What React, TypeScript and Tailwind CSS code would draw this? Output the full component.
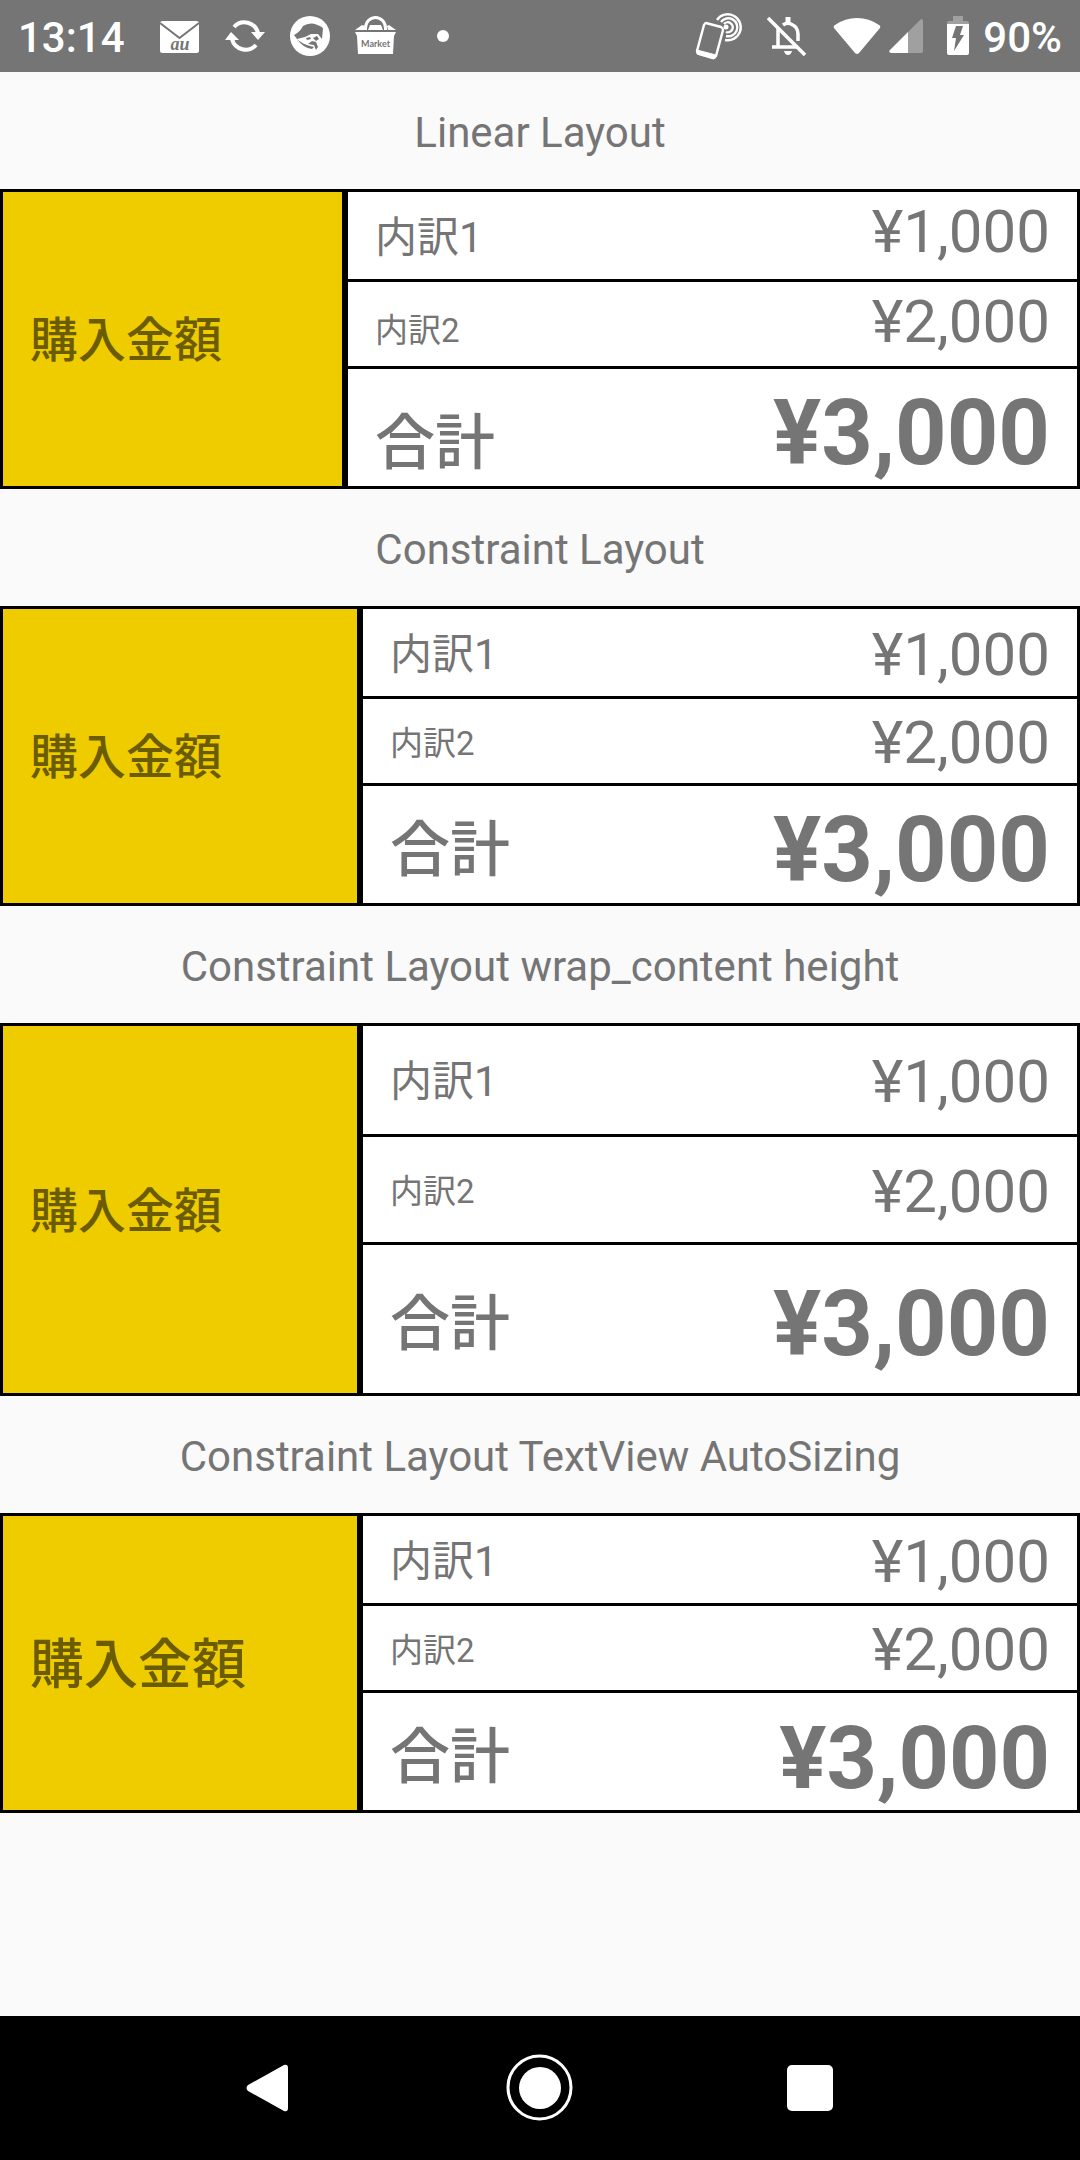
import React from "react";

type Row = { label: string; amount: string };

type TableProps = {
  title: string;
  narrow?: boolean;
  baseline?: boolean;
  tall?: boolean;
  autoSize?: boolean;
};

const rows: Row[] = [
  { label: "内訳1", amount: "¥1,000" },
  { label: "内訳2", amount: "¥2,000" },
  { label: "合計", amount: "¥3,000" },
];

const labelText = ["text-[42px]", "text-[33px]", "text-[60px] font-medium"];
const amountText = ["text-[60px]", "text-[60px]", "text-[90px] font-bold"];
const shortRows = ["h-[90px]", "h-[87px]", "h-[117px]"];
const tallRows = ["h-[111px]", "h-[108px]", "h-[148px]"];
const centeredPadding = ["pt-1", "pt-1", "pt-3"];
const baselinePadding = ["pb-2", "pb-1", "pt-3"];

function PriceTable({ title, narrow, baseline, tall, autoSize }: TableProps) {
  const heights = tall ? tallRows : shortRows;
  const padding = baseline ? baselinePadding : centeredPadding;
  return (
    <section>
      <h2 className="flex h-[117px] items-center justify-center pt-1 text-[42px] leading-[50px]">{title}</h2>
      <table className="w-full table-fixed border-separate border-spacing-0 border-[3px] border-black bg-white">
        <colgroup>
          <col className={narrow ? "w-[345px]" : "w-[360px]"} />
          <col />
        </colgroup>
        <tbody>
          {rows.map((row, i) => (
            <tr key={row.label} className={heights[i]}>
              {i === 0 && (
                <th
                  rowSpan={3}
                  scope="rowgroup"
                  className={`border-r-[6px] border-black bg-[#efcc00] p-0 pt-1 pl-[27px] text-left align-middle font-medium text-[#6b5c00] ${autoSize ? "text-[54px]" : "text-[48px]"}`}
                >
                  購入金額
                </th>
              )}
              <td className={`p-0 ${i < 2 ? "border-b-[3px] border-black" : ""}`}>
                <div className={`flex justify-between px-[27px] leading-none ${padding[i]} ${baseline ? "items-baseline" : "items-center"}`}>
                  <span className={labelText[i]}>{row.label}</span>
                  <span className={i === 2 && autoSize ? "text-[88px] font-bold" : amountText[i]}>{row.amount}</span>
                </div>
              </td>
            </tr>
          ))}
        </tbody>
      </table>
    </section>
  );
}

function MailIcon() {
  return (
    <svg className="h-8 w-10" viewBox="0 0 40 32" aria-hidden="true">
      <rect width="39" height="32" rx="2.5" fill="#fff" />
      <path d="M0 2 19.500 17 39 2" fill="none" stroke="#757575" strokeWidth="2" />
      <text x="20" y="29" textAnchor="middle" fontFamily="Liberation Serif, serif" fontStyle="italic" fontWeight="bold" fontSize="18" fill="#757575">au</text>
    </svg>
  );
}

function SyncIcon() {
  return (
    <svg className="h-9 w-10" viewBox="0 0 40 36" fill="none" aria-hidden="true">
      <path d="M9 9A14 14 0 0 1 33 15M31 27A14 14 0 0 1 7 21" stroke="#fff" strokeWidth="4" />
      <path d="M26 14h14l-7 8zM0 22h14L6 14z" fill="#fff" />
    </svg>
  );
}

function FaceIcon() {
  return (
    <svg className="h-10 w-10" viewBox="0 0 40 40" aria-hidden="true">
      <circle cx="20" cy="20" r="20" fill="#fff" />
      <path d="M4 19Q10 16 13 10 22 4 33 12L32 23 28 18 21 18 15 21 7 23z" fill="#757575" />
      <path d="M7 23Q13 32 22 33L24 31 20 30Q12 28 7 23z" fill="#757575" />
      <path d="M18 28 22 25 26 26 28 31 26 34 24 29zM16 22l4-1 1 2-4 1zM23 22l4-2 2 3-3 2z" fill="#757575" />
    </svg>
  );
}

function MarketIcon() {
  return (
    <svg className="h-10 w-[42px]" viewBox="0 0 42 40" aria-hidden="true">
      <path d="M0 16h41l-2 4-1 18H3L2 20zM7 9l3 1-1 4H0zM34 9l7 5h-8l-1-4zM15 9h11l2 5H13z" fill="#fff" />
      <path d="M10.500 14v-2a10 10.500 0 0 1 20 0v2" fill="none" stroke="#fff" strokeWidth="3" />
      <text x="20.500" y="31" textAnchor="middle" fontFamily="Lato, sans-serif" fontWeight="bold" fontSize="9" fill="#757575">Market</text>
    </svg>
  );
}

function NfcPhoneIcon() {
  return (
    <svg className="h-12 w-12" viewBox="0 0 48 48" fill="none" stroke="#fff" aria-hidden="true">
      <path d="M11 11 26 15q2 1 2 3l-7 26q-1 2-3 2L4 42q-2-1-2-3L9 13q1-2 2-2z" strokeWidth="2.4" />
      <path d="M2 38 21 43l-2 4L2 42z" fill="#fff" />
      <path d="M22 8a13 13 0 1 1 8 20M26 10a9 9 0 1 1 5 14M29 12a5 5 0 1 1 2 8" strokeWidth="2.4" />
      <circle cx="31" cy="15" r="2.5" fill="#fff" stroke="none" />
    </svg>
  );
}

function BellOffIcon() {
  return (
    <svg className="h-10 w-10" viewBox="0 0 40 40" fill="none" stroke="#fff" aria-hidden="true">
      <path d="M11 13v18M5 31h26M16 9q4-3 8-1 7 3 7 10v7" strokeWidth="3.5" />
      <path d="M21 1v6" strokeWidth="5" />
      <path d="M17 35h8q-1 4-4 4t-4-4z" fill="#fff" stroke="none" />
      <path d="M1 2 38 39" strokeWidth="3.5" />
    </svg>
  );
}

function WifiIcon() {
  return (
    <svg className="h-9 w-12" viewBox="0 0 48 36" aria-hidden="true">
      <path d="M2 7Q12 0 24 0t22 7q2 1 1 3L26 35q-2 2-4 0L1 10Q0 8 2 7z" fill="#fff" />
    </svg>
  );
}

function SignalIcon() {
  return (
    <svg className="h-[34px] w-[34px]" viewBox="0 0 34 34" aria-hidden="true">
      <path d="M32 0q2 0 2 2v30q0 2-2 2H19V13z" fill="#a0a0a0" />
      <path d="M19 13v21H2q-3-1-1-3z" fill="#fff" />
    </svg>
  );
}

function BatteryIcon() {
  return (
    <svg className="h-10 w-[22px]" viewBox="0 0 22 40" aria-hidden="true">
      <path d="M6 0h10v5h4q2 0 2 2v2H0V7q0-2 2-2h4z" fill="#a0a0a0" />
      <path d="M0 8h22v29q0 2-2 2H2q-2 0-2-2z" fill="#fff" />
      <path d="M9 10h7l-3 9h4L7 35l2-13H5z" fill="#757575" />
    </svg>
  );
}

function StatusBar() {
  return (
    <header className="flex h-[72px] items-center bg-[#757575] text-[42px] font-medium leading-none text-white">
      <time className="ml-[18px] w-[140px] pt-1">13:14</time>
      <div className="flex items-center">
        <span className="ml-[2px] pt-[2px]"><MailIcon /></span>
        <span className="ml-[25px]"><SyncIcon /></span>
        <span className="ml-[25px]"><FaceIcon /></span>
        <span className="ml-[25px]"><MarketIcon /></span>
        <span className="ml-[40px] h-3 w-3 rounded-full bg-white" />
      </div>
      <div className="ml-auto flex items-center pr-[18px]">
        <NfcPhoneIcon />
        <span className="ml-[24px]"><BellOffIcon /></span>
        <span className="ml-[26px]"><WifiIcon /></span>
        <span className="ml-[8px]"><SignalIcon /></span>
        <span className="ml-[24px]"><BatteryIcon /></span>
        <span className="ml-[14px] pt-1">90%</span>
      </div>
    </header>
  );
}

function NavBar() {
  return (
    <nav className="flex h-36 items-center justify-center gap-[202px] bg-black">
      <button type="button" aria-label="Back">
        <svg className="h-[68px] w-[68px]" viewBox="0 0 68 68" fill="#fff" aria-hidden="true">
          <path d="M12 31 48 11q4-1 4 3v40q0 4-4 3L12 37q-3-3 0-6z" />
        </svg>
      </button>
      <button type="button" aria-label="Home">
        <svg className="h-[68px] w-[68px]" viewBox="0 0 68 68" aria-hidden="true">
          <circle cx="33.500" cy="33.500" r="31.500" fill="none" stroke="#fff" strokeWidth="3" />
          <circle cx="34" cy="34" r="21" fill="#fff" />
        </svg>
      </button>
      <button type="button" aria-label="Recent apps">
        <svg className="h-[68px] w-[68px]" viewBox="0 0 68 68" aria-hidden="true">
          <rect x="11" y="11" width="46" height="46" rx="5" fill="#fff" />
        </svg>
      </button>
    </nav>
  );
}

export default function App() {
  return (
    <div className="flex min-h-screen flex-col bg-[#fafafa] font-[Roboto,'Noto_Sans_CJK_JP',sans-serif] text-[#757575]">
      <StatusBar />
      <main className="flex-1">
        <PriceTable title="Linear Layout" narrow baseline />
        <PriceTable title="Constraint Layout" />
        <PriceTable title="Constraint Layout wrap_content height" tall />
        <PriceTable title="Constraint Layout TextView AutoSizing" autoSize />
      </main>
      <NavBar />
    </div>
  );
}
